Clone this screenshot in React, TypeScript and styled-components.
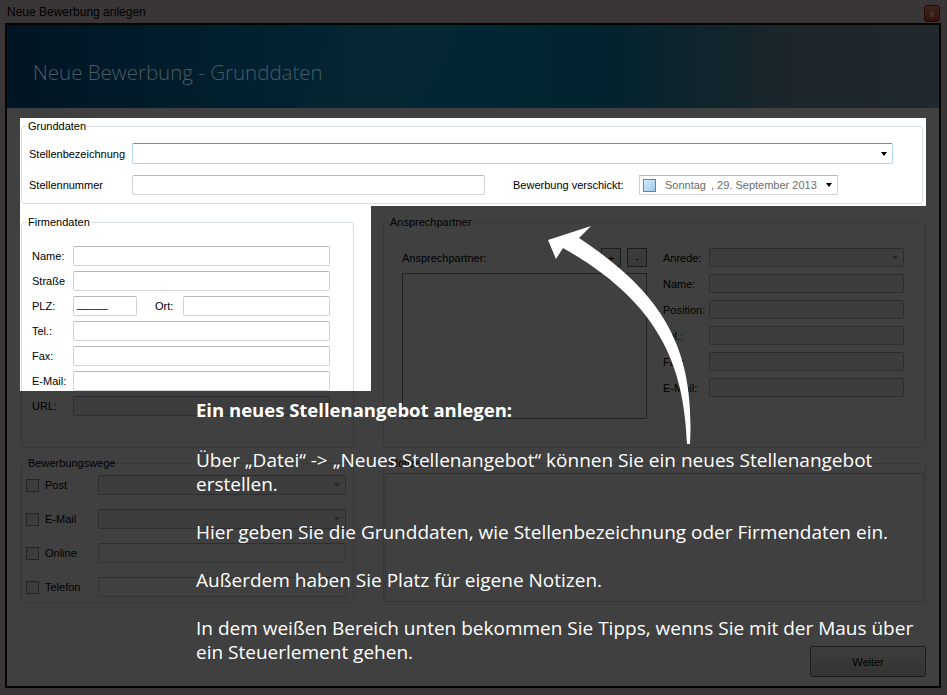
import React from "react";
import styled, { createGlobalStyle } from "styled-components";

const Global = createGlobalStyle`
  html, body { margin: 0; padding: 0; background: #000; }
  #root { width: 947px; height: 695px; }
`;

const Window = styled.div`
  position: relative;
  width: 947px;
  height: 695px;
  box-sizing: border-box;
  background: #e8d4da;
  padding: 0 6px 7px 5px;
  display: flex;
  flex-direction: column;
  overflow: hidden;
  font-family: "Liberation Sans", Arial, sans-serif;
  font-size: 11px;
  color: #000;
`;

const TitleBar = styled.div`
  height: 23px;
  flex: none;
  display: flex;
  align-items: center;
  justify-content: space-between;
  padding-left: 2px;
  font-size: 12px;
`;

const CloseBtn = styled.div`
  align-self: flex-start;
  margin: 5px 1px 0 0;
  width: 16px;
  height: 17px;
  box-sizing: border-box;
  border: 1px solid #8a3020;
  border-radius: 3px;
  background: linear-gradient(#f59272, #d24a2c);
  color: #fff;
  font: bold 9px "Liberation Sans", Arial, sans-serif;
  display: flex;
  align-items: center;
  justify-content: center;
`;

const Client = styled.div`
  flex: 1;
  min-height: 0;
  display: flex;
  flex-direction: column;
  border: 2px solid #111;
`;

const Header = styled.div`
  height: 83px;
  flex: none;
  box-sizing: border-box;
  display: flex;
  align-items: center;
  padding: 10px 0 0 26px;
  background:
    linear-gradient(118deg, transparent 0 34%, rgba(255, 255, 255, 0.06) 35% 46%, transparent 47%),
    linear-gradient(90deg, #04528f 0%, #0a84bf 26%, #0b9ad0 48%, #0a8cbc 64%, #6f97ab 84%, #86a2b4 100%);
`;

const HeaderTitle = styled.h1`
  position: relative;
  z-index: 3;
  margin: 0;
  font-family: "Open Sans", "Noto Sans", sans-serif;
  font-weight: 300;
  font-size: 20.5px;
  color: #4b5a63;
`;

const Body = styled.div`
  flex: 1;
  background: #fff;
  display: flex;
  flex-direction: column;
`;

const ContentPanel = styled.div`
  height: 522px;
  flex: none;
  box-sizing: border-box;
  padding: 18px 0 0 14px;
  border-bottom: 1px solid #ececec;
  display: flex;
  flex-direction: column;
`;

const Columns = styled.div`
  display: flex;
  gap: 29px;
  margin-top: 18px;
`;

const Column = styled.div`
  display: flex;
  flex-direction: column;
  gap: 15px;
`;

const Group = styled.div<{ $w: number; $h: number; $pad: string }>`
  position: relative;
  box-sizing: border-box;
  flex: none;
  width: ${(p) => p.$w}px;
  height: ${(p) => p.$h}px;
  padding: ${(p) => p.$pad};
  border: 1px solid #d5dfe5;
  border-radius: 3px;
  display: flex;
  flex-direction: column;
`;

const GroupTitle = styled.span`
  position: absolute;
  top: -7px;
  left: 5px;
  padding: 0 1px;
  background: #fff;
  line-height: 13px;
`;

const Row = styled.div<{ $h: number; $mt?: number; $top?: boolean }>`
  display: flex;
  align-items: ${(p) => (p.$top ? "flex-start" : "center")};
  height: ${(p) => p.$h}px;
  margin-top: ${(p) => p.$mt ?? 0}px;
  flex: none;
`;

const Stack = styled.div<{ $gap: number }>`
  display: flex;
  flex-direction: column;
  gap: ${(p) => p.$gap}px;
`;

const Label = styled.span<{ $w?: number; $ml?: number }>`
  flex: none;
  width: ${(p) => (p.$w ? `${p.$w}px` : "auto")};
  margin-left: ${(p) => p.$ml ?? 0}px;
  white-space: nowrap;
`;

const TextBox = styled.div<{ $w: number; $h: number; $disabled?: boolean; $focus?: boolean }>`
  flex: none;
  box-sizing: border-box;
  width: ${(p) => p.$w}px;
  height: ${(p) => p.$h}px;
  background: ${(p) => (p.$disabled ? "#f4f4f4" : "#fff")};
  border: 1px solid ${(p) => (p.$focus ? "#b3d3ee" : p.$disabled ? "#b4b8bc" : "#cfd2d6")};
  border-top-color: ${(p) => (p.$focus ? "#5b93c4" : p.$disabled ? "#a8acb0" : "#b5b8bd")};
  border-radius: 2px;
  display: flex;
  align-items: center;
  justify-content: flex-end;
  padding: 0 5px 0 3px;
`;

const Caret = styled.span<{ $c?: string }>`
  width: 0;
  height: 0;
  border-left: 3.5px solid transparent;
  border-right: 3.5px solid transparent;
  border-top: 4px solid ${(p) => p.$c ?? "#000"};
`;

const Mask = styled.span`
  margin-right: auto;
  margin-top: -4px;
`;

const DatePicker = styled.div`
  flex: none;
  box-sizing: border-box;
  width: 199px;
  height: 20px;
  border: 1px solid #cfd2d6;
  border-top-color: #b5b8bd;
  display: flex;
  align-items: center;
  padding: 0 5px 0 3px;
  color: #6d6d6d;
`;

const DateCheck = styled.span`
  box-sizing: border-box;
  width: 13px;
  height: 13px;
  border: 1px solid #3d90d0;
  background: linear-gradient(135deg, #d6ecfb, #9ccaee);
  margin-right: 9px;
`;

const DateText = styled.span<{ $ml?: number }>`
  margin-left: ${(p) => p.$ml ?? 0}px;
  white-space: nowrap;
`;

const Spacer = styled.span`
  flex: 1;
`;

const Check = styled.span`
  flex: none;
  box-sizing: border-box;
  width: 13px;
  height: 13px;
  border: 1px solid #8e8f8f;
  background: linear-gradient(135deg, #e6e6e6, #fdfdfd);
  margin-right: 6px;
`;

const SmallBtn = styled.div<{ $ml: number }>`
  flex: none;
  box-sizing: border-box;
  width: 20px;
  height: 19px;
  margin-left: ${(p) => p.$ml}px;
  border: 1px solid #707070;
  background: linear-gradient(#f2f2f2, #dddddd);
  display: flex;
  align-items: center;
  justify-content: center;
`;

const ListBox = styled.div`
  box-sizing: border-box;
  height: 146px;
  margin-top: 6px;
  border: 1px solid #828790;
  background: #fff;
`;

const SubColumn = styled.div<{ $w: number; $ml?: number }>`
  width: ${(p) => p.$w}px;
  margin-left: ${(p) => p.$ml ?? 0}px;
  display: flex;
  flex-direction: column;
`;

const Memo = styled.div`
  flex: 1;
  border: 1px solid #cfd2d6;
  border-top-color: #b5b8bd;
  background: #fff;
`;

const Footer = styled.div`
  display: flex;
  justify-content: flex-end;
  padding: 16px 13px 0 0;
`;

const Button = styled.div`
  box-sizing: border-box;
  width: 116px;
  height: 31px;
  border: 1px solid #707070;
  border-radius: 2px;
  background: linear-gradient(#f3f3f3, #e3e3e3 50%, #dadada 51%, #cfcfcf);
  display: flex;
  align-items: center;
  justify-content: center;
`;

const Dim = styled.div`
  position: absolute;
  inset: 0;
  z-index: 2;
  pointer-events: none;
  background: rgba(0, 0, 0, 0.75);
  clip-path: polygon(
    0 0, 947px 0, 947px 695px, 0 695px, 0 118px,
    20px 118px, 20px 391px, 371px 391px, 371px 206px, 926px 206px, 926px 118px,
    0 118px
  );
`;

const ArrowLayer = styled.svg`
  position: absolute;
  left: 0;
  top: 0;
  z-index: 4;
  pointer-events: none;
`;

const Tip = styled.div`
  position: absolute;
  left: 196px;
  top: 398px;
  z-index: 4;
  color: #fff;
  font-family: "Open Sans", "Noto Sans", sans-serif;
  font-size: 19px;
  line-height: 24px;
  white-space: nowrap;
`;

const TipTitle = styled.p`
  margin: 0 0 26px;
  font-weight: 700;
  font-size: 18.5px;
`;

const TipPara = styled.p`
  margin: 0 0 24px;
`;

const firmRows = ["Name:", "Straße"];
const firmRows2 = ["Tel.:", "Fax:", "E-Mail:", "URL:"];
const apRows = ["Anrede:", "Name:", "Position:", "Tel.:", "Fax:", "E-Mail:"];
const wege: { label: string; combo: boolean }[] = [
  { label: "Post", combo: true },
  { label: "E-Mail", combo: true },
  { label: "Online", combo: false },
  { label: "Telefon", combo: false },
];

export default function App() {
  return (
    <>
      <Global />
      <Window>
        <TitleBar>
          <span>Neue Bewerbung anlegen</span>
          <CloseBtn>x</CloseBtn>
        </TitleBar>
        <Client>
          <Header>
            <HeaderTitle>Neue Bewerbung - Grunddaten</HeaderTitle>
          </Header>
          <Body>
            <ContentPanel>
              <Group $w={902} $h={78} $pad="16px 0 0 7px">
                <GroupTitle>Grunddaten</GroupTitle>
                <Row $h={21}>
                  <Label $w={103}>Stellenbezeichnung</Label>
                  <TextBox $w={761} $h={21} $focus>
                    <Caret />
                  </TextBox>
                </Row>
                <Row $h={20} $mt={11}>
                  <Label $w={103}>Stellennummer</Label>
                  <TextBox $w={353} $h={20} />
                  <Label $w={126} $ml={28}>Bewerbung verschickt:</Label>
                  <DatePicker>
                    <DateCheck />
                    <DateText>Sonntag</DateText>
                    <DateText $ml={5}>, 29. September 2013</DateText>
                    <Spacer />
                    <Caret />
                  </DatePicker>
                </Row>
              </Group>

              <Columns>
                <Column>
                  <Group $w={333} $h={226} $pad="23px 0 0 10px">
                    <GroupTitle>Firmendaten</GroupTitle>
                    <Stack $gap={5}>
                      {firmRows.map((l) => (
                        <Row key={l} $h={20}>
                          <Label $w={41}>{l}</Label>
                          <TextBox $w={257} $h={20} />
                        </Row>
                      ))}
                      <Row $h={20}>
                        <Label $w={41}>PLZ:</Label>
                        <TextBox $w={64} $h={20}>
                          <Mask>_____</Mask>
                        </TextBox>
                        <Label $w={28} $ml={18}>Ort:</Label>
                        <TextBox $w={147} $h={20} />
                      </Row>
                      {firmRows2.map((l) => (
                        <Row key={l} $h={20}>
                          <Label $w={41}>{l}</Label>
                          <TextBox $w={257} $h={20} $disabled={l === "URL:"} />
                        </Row>
                      ))}
                    </Stack>
                  </Group>
                  <Group $w={333} $h={140} $pad="11px 0 0 4px">
                    <GroupTitle>Bewerbungswege</GroupTitle>
                    <Stack $gap={14}>
                      {wege.map((w) => (
                        <Row key={w.label} $h={20}>
                          <Check />
                          <Label $w={53}>{w.label}</Label>
                          <TextBox $w={248} $h={20} $disabled={w.combo}>
                            {w.combo && <Caret $c="#a0a0a0" />}
                          </TextBox>
                        </Row>
                      ))}
                    </Stack>
                  </Group>
                </Column>

                <Column>
                  <Group $w={543} $h={226} $pad="25px 0 0 18px">
                    <GroupTitle>Ansprechpartner</GroupTitle>
                    <Row $h={171} $top>
                      <SubColumn $w={245}>
                        <Row $h={19}>
                          <Label>Ansprechpartner:</Label>
                          <Spacer />
                          <SmallBtn $ml={0}>+</SmallBtn>
                          <SmallBtn $ml={6}>-</SmallBtn>
                        </Row>
                        <ListBox />
                      </SubColumn>
                      <SubColumn $w={241} $ml={16}>
                        <Stack $gap={7}>
                          {apRows.map((l, i) => (
                            <Row key={l + i} $h={19}>
                              <Label $w={46}>{l}</Label>
                              <TextBox $w={195} $h={19} $disabled>
                                {i === 0 && <Caret $c="#a0a0a0" />}
                              </TextBox>
                            </Row>
                          ))}
                        </Stack>
                      </SubColumn>
                    </Row>
                  </Group>
                  <Group $w={543} $h={142} $pad="9px 1px 2px 1px">
                    <GroupTitle>Notizen</GroupTitle>
                    <Memo />
                  </Group>
                </Column>
              </Columns>
            </ContentPanel>
            <Footer>
              <Button>Weiter</Button>
            </Footer>
          </Body>
        </Client>

        <Dim />

        <ArrowLayer width="947" height="695" viewBox="0 0 947 695">
          <path
            d="M548 240 L591 226 L579 238 C665 295 695 350 690 444 L687 444 C684 360 655 300 563 248 L556 259 Z"
            fill="#fff"
          />
        </ArrowLayer>

        <Tip>
          <TipTitle>Ein neues Stellenangebot anlegen:</TipTitle>
          <TipPara>
            Über „Datei“ -&gt; „Neues Stellenangebot“ können Sie ein neues Stellenangebot
            <br />
            erstellen.
          </TipPara>
          <TipPara>Hier geben Sie die Grunddaten, wie Stellenbezeichnung oder Firmendaten ein.</TipPara>
          <TipPara>Außerdem haben Sie Platz für eigene Notizen.</TipPara>
          <TipPara>
            In dem weißen Bereich unten bekommen Sie Tipps, wenns Sie mit der Maus über
            <br />
            ein Steuerlement gehen.
          </TipPara>
        </Tip>
      </Window>
    </>
  );
}
